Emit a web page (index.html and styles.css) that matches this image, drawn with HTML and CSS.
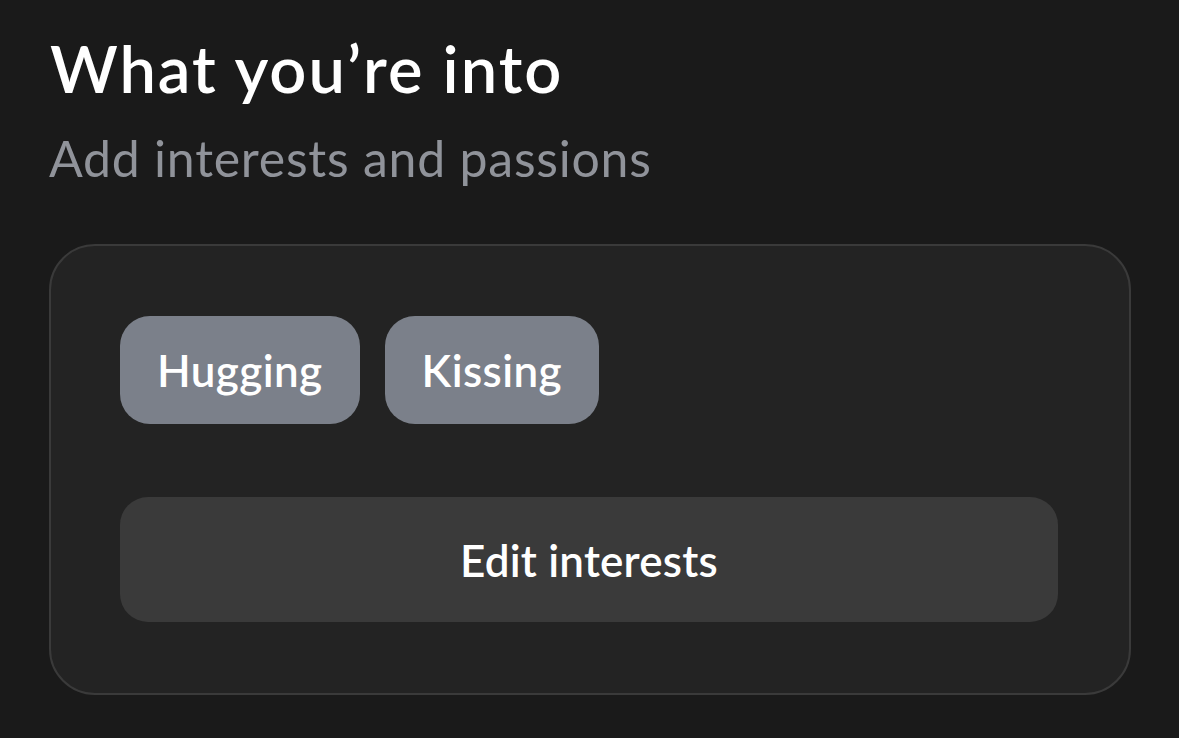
FILE: index.html
```html
<!DOCTYPE html>
<html lang="en">
<head>
<meta charset="utf-8">
<link rel="stylesheet" href="styles.css">
</head>
<body>
<main class="section">
  <h1 class="title">What you’re into</h1>
  <p class="subtitle">Add interests and passions</p>
  <div class="card">
    <div class="chips">
      <span class="chip">Hugging</span>
      <span class="chip">Kissing</span>
    </div>
    <button class="edit">Edit interests</button>
  </div>
</main>
</body>
</html>
```
FILE: styles.css
```css
html, body {
  margin: 0;
  padding: 0;
  background: #1a1a1a;
}
body {
  font-family: Lato, "Noto Sans", sans-serif;
  color: #ffffff;
}
.section {
  padding: 28px 49px 0 49px;
  width: 1083px;
}
.title {
  margin: 0 0 0 1px;
  font-size: 65px;
  font-weight: 600;
  line-height: 80px;
  letter-spacing: 2px;
}
.subtitle {
  margin: 18px 0 0 0;
  font-size: 50px;
  font-weight: 400;
  line-height: 64px;
  letter-spacing: 0.75px;
  color: #90939a;
}
.card {
  margin-top: 54px;
  box-sizing: border-box;
  width: 1082px;
  height: 451px;
  border: 2px solid #3a3a3a;
  border-radius: 46px;
  background: #232323;
  padding: 70px 70px 70px 69px;
  display: flex;
  flex-direction: column;
  gap: 73px;
}
.chips {
  display: flex;
  gap: 25px;
}
.chip {
  height: 108px;
  box-sizing: border-box;
  padding: 0 37px;
  display: flex;
  align-items: center;
  background: #7b808a;
  border-radius: 30px;
  font-size: 44px;
  font-weight: 600;
  letter-spacing: 0.4px;
  color: #fff;
}
.chip-wide {
  padding: 0 38px;
}
.edit {
  height: 125px;
  width: 938px;
  border: none;
  border-radius: 28px;
  background: #3a3a3a;
  color: #fff;
  font-family: inherit;
  font-size: 44px;
  font-weight: 600;
  letter-spacing: 0.2px;
  padding: 0;
}
```
